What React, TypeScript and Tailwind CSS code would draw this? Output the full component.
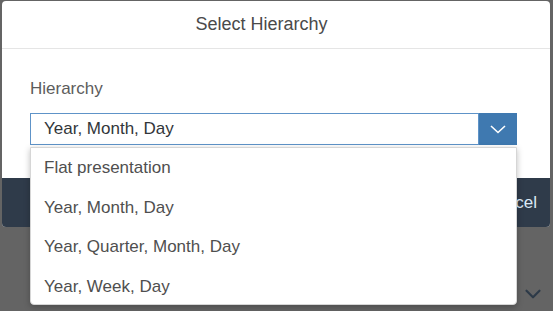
import { ChevronDown } from "lucide-react";

const options = [
  "Flat presentation",
  "Year, Month, Day",
  "Year, Quarter, Month, Day",
  "Year, Week, Day",
];

export default function App() {
  return (
    <div className="relative h-[311px] w-[553px] overflow-hidden bg-[#646464] font-['Liberation_Sans',Arial,sans-serif]">
      {/* dialog */}
      <div className="pl-[2px] pt-px">
        <div className="flex w-[548px] flex-col overflow-hidden rounded-[4px] bg-white">
          <div className="flex h-[48px] items-center justify-center border-b border-[#e5e5e5] pr-[29px] text-[18px] text-[#4a4a4a]">
            Select Hierarchy
          </div>
          <div className="px-[28px] pt-[30px] pb-[33px]">
            <div className="text-[17px] leading-[20px] text-[#5c5c5c]">Hierarchy</div>
            <div className="mt-[14px] flex h-[32px] w-[487px]">
              <div className="flex flex-1 items-center border border-[#5e93c8] pl-[13px] text-[17px] leading-[20px] text-[#32363a]">
                Year, Month, Day
              </div>
              <div className="flex w-[38px] items-center justify-center bg-[#3f79b0] text-white">
                <svg width="16" height="9" viewBox="0 0 16 9" fill="none">
                  <path d="M1 1l7 6.5L15 1" stroke="white" strokeWidth="1.6" />
                </svg>
              </div>
            </div>
          </div>
          <div className="flex h-[49px] items-center justify-end bg-[#2f3b4a] pr-[13px]">
            <span className="text-[17px] text-[#dbe9f7]">Cancel</span>
          </div>
        </div>
      </div>

      {/* page content under the overlay */}
      <ChevronDown
        className="absolute left-[520px] top-[281px] text-[#2d3a48]"
        size={26}
        strokeWidth={2}
      />

      {/* open select list */}
      <div className="absolute left-[30px] top-[147px] h-[158px] w-[487px] overflow-hidden rounded-b-[4px] border border-[#d6d6d6] bg-white shadow-[0_2px_6px_rgba(0,0,0,0.25)]">
        {options.map((opt) => (
          <div
            key={opt}
            className="flex h-[39.5px] items-center pl-[13px] text-[17px] text-[#4f4f4f]"
          >
            {opt}
          </div>
        ))}
      </div>
    </div>
  );
}
